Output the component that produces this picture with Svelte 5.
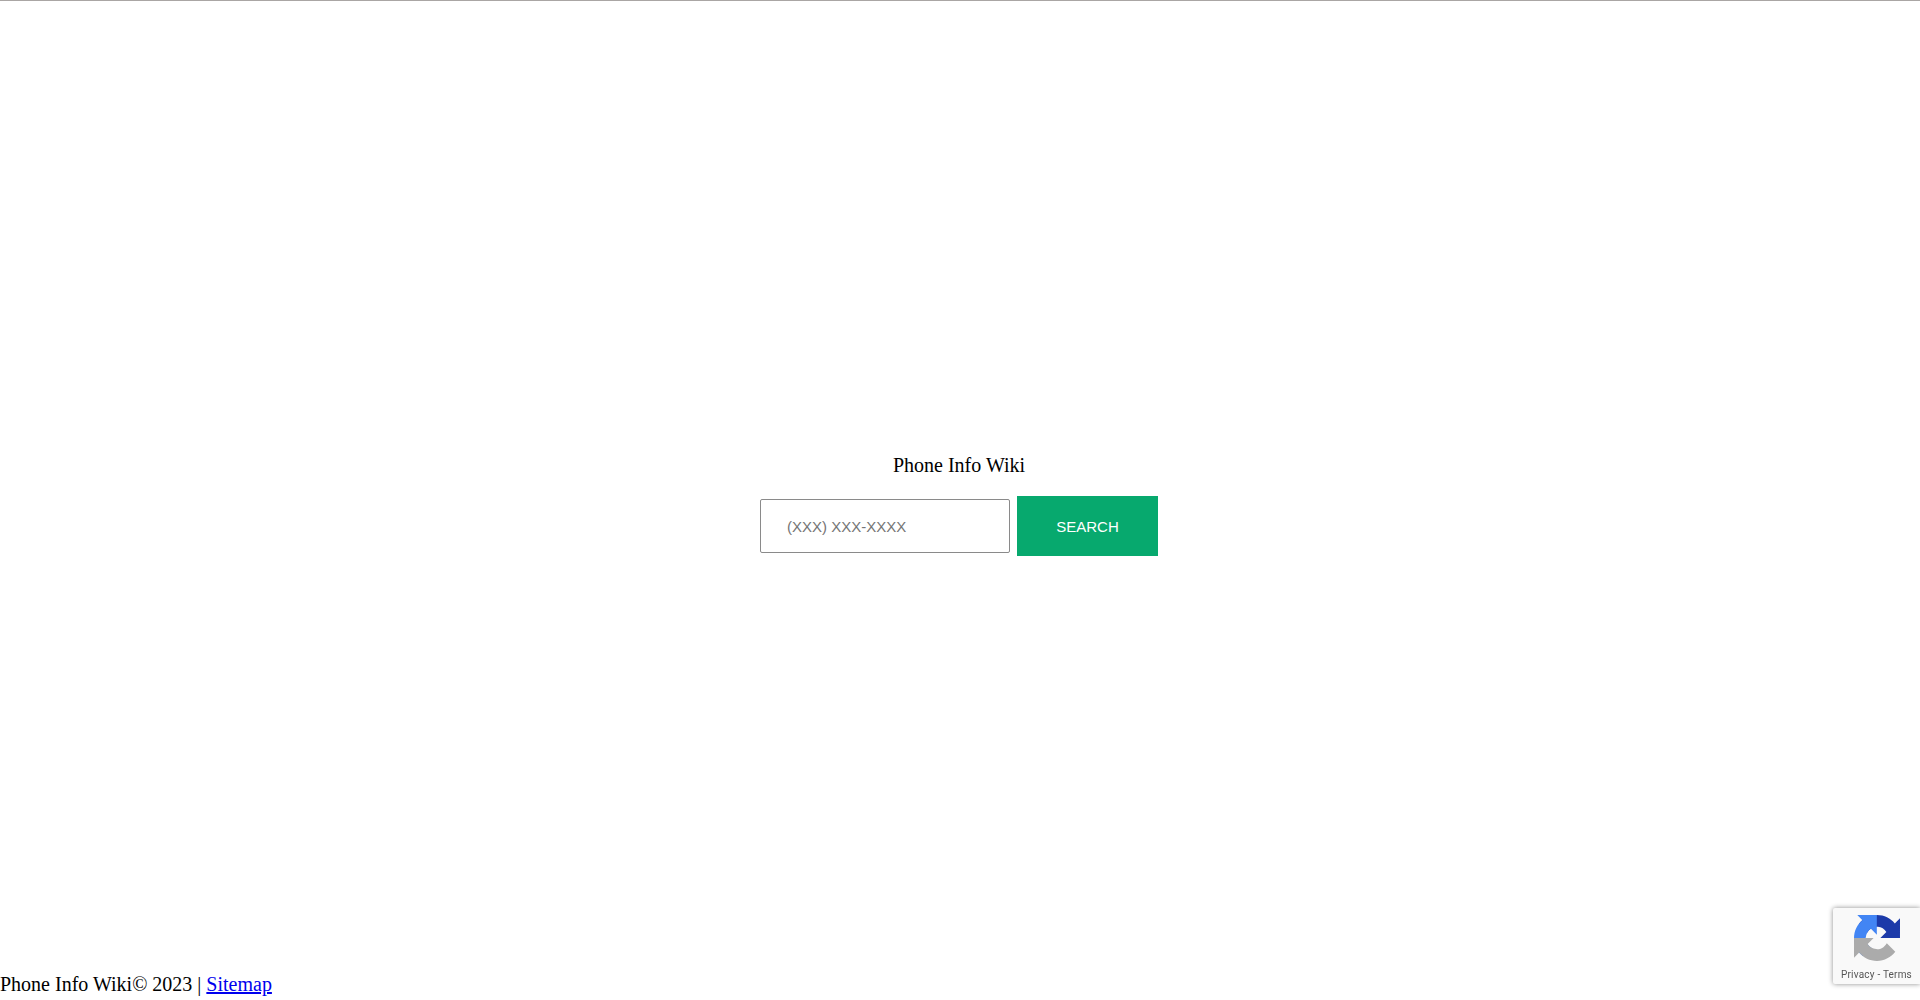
<script>
    let phone = $state("");
</script>

<div class="page">
    <div class="topline"></div>
    <main class="home">
        <p class="title">Phone Info Wiki</p>
        <form class="search" onsubmit={(e) => e.preventDefault()}>
            <input type="text" placeholder="(XXX) XXX-XXXX" bind:value={phone} />
            <button type="submit">SEARCH</button>
        </form>
    </main>
    <footer>Phone Info Wiki© 2023 | <a href="#sitemap">Sitemap</a></footer>
</div>

<div class="badge">
    <svg class="logo" viewBox="0 0 64 64" width="46" height="46">
        <path fill="#1c3aa9" d="M64 31.955l-.033-1.37V4.687l-7.16 7.16C50.948 4.674 42.033.093 32.05.093c-10.4 0-19.622 4.96-25.458 12.64l11.736 11.86a15.55 15.55 0 0 1 4.754-5.334c2.05-1.6 4.952-2.906 8.968-2.906.485 0 .86.057 1.135.163 4.976.393 9.288 3.14 11.828 7.124l-8.307 8.307c10.522-.04 22.4-.066 27.295.006" />
        <path fill="#4285f4" d="M31.862.094l-1.37.033H4.594l7.16 7.16C4.58 13.147 0 22.06 0 32.046c0 10.4 4.96 19.622 12.64 25.458L24.5 45.768a15.55 15.55 0 0 1-5.334-4.754c-1.6-2.05-2.906-4.952-2.906-8.968 0-.485.057-.86.163-1.135.393-4.976 3.14-9.288 7.124-11.828l8.307 8.307c-.04-10.522-.066-22.4.006-27.295" />
        <path fill="#ababab" d="M0 32.046l.033 1.37v25.898l7.16-7.16C13.052 59.327 21.967 63.9 31.95 63.9c10.4 0 19.622-4.96 25.458-12.64L45.672 39.4a15.55 15.55 0 0 1-4.754 5.334c-2.05 1.6-4.952 2.906-8.968 2.906-.485 0-.86-.057-1.135-.163-4.976-.393-9.288-3.14-11.828-7.124l8.307-8.307C16.772 32.088 4.894 32.114 0 32.042" />
    </svg>
    <div class="links"><span>Privacy</span> - <span>Terms</span></div>
</div>

<style>
    :global(body) {
        background: #fff;
    }

    .page {
        height: 1000px;
        display: flex;
        flex-direction: column;
        font-family: "Liberation Serif", "Times New Roman", serif;
        font-size: 20px;
        color: #000;
        overflow: hidden;
    }

    .topline {
        height: 1px;
        background: #aaa6a4;
    }

    .home {
        flex: 1;
        display: flex;
        flex-direction: column;
        align-items: center;
        justify-content: center;
        gap: 19px;
        padding-top: 35px;
        padding-right: 2px;
    }

    .title {
        margin: 0;
        line-height: 23px;
    }

    .search {
        display: flex;
        align-items: center;
        gap: 7px;
    }

    input {
        box-sizing: border-box;
        width: 250px;
        height: 54px;
        padding: 1px 26px 0;
        border: 1px solid #8a8a8a;
        border-radius: 2px;
        background: #fff;
        font-family: "Liberation Sans", Arial, sans-serif;
        font-size: 15px;
        color: #333;
        outline: none;
    }

    input::placeholder {
        color: #757575;
        opacity: 1;
    }

    button {
        width: 141px;
        height: 60px;
        border: 0;
        padding: 1px 0 0;
        background: #07a96e;
        color: #fff;
        font-family: "Liberation Sans", Arial, sans-serif;
        font-size: 15px;
    }

    footer {
        line-height: 23px;
        padding-bottom: 4px;
    }

    a {
        color: #0000ee;
    }

    .badge {
        position: fixed;
        left: 1833px;
        top: 908px;
        width: 87px;
        height: 76px;
        box-sizing: border-box;
        background: #f9f9f9;
        border-radius: 2px 0 0 2px;
        box-shadow: 0 0 5px #8c8c8c;
        display: flex;
        flex-direction: column;
        align-items: center;
    }

    .logo {
        margin-top: 7px;
    }

    .links {
        margin-top: 8px;
        font-family: Roboto, "Liberation Sans", sans-serif;
        font-size: 10px;
        line-height: 12px;
        letter-spacing: 0.2px;
        color: #555;
        white-space: nowrap;
    }
</style>
